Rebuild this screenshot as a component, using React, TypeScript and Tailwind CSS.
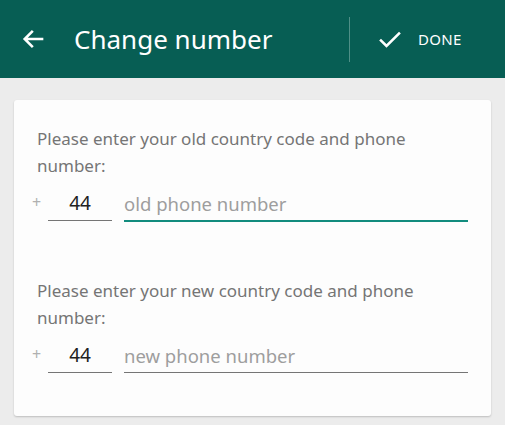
import React from 'react'

function PhoneRow({ placeholder, active }: { placeholder: string; active?: boolean }) {
    return (
        <div className="flex items-end h-[43px]">
            <span className="w-[34px] pl-[18px] text-[16px] text-[#b0b0b0] leading-none pb-[12px]">+</span>
            <div className="w-[64px] border-b border-[#757575] text-center text-[19px] text-[#212121] leading-none pb-[7px] mb-[1px]">
                44
            </div>
            <div
                className={
                    active
                        ? 'ml-[12px] flex-1 border-b-2 border-[#128c7e] text-[18.5px] text-[#9e9e9e] leading-none pb-[7px]'
                        : 'ml-[12px] flex-1 border-b border-[#757575] text-[18.5px] text-[#9e9e9e] leading-none pb-[7px] mb-[1px]'
                }
            >
                {placeholder}
            </div>
        </div>
    )
}

export default function App() {
    return (
        <div className="w-[505px] h-[425px] bg-[#ececec] font-['Noto_Sans',sans-serif] overflow-hidden">
            {/* Toolbar */}
            <div className="h-[78px] bg-[#075e54] flex items-center text-white">
                <svg className="ml-[20px]" width="28" height="28" viewBox="0 0 24 24" fill="none">
                    <path d="M20 12H4.5M11 5l-7 7 7 7" stroke="white" strokeWidth="2.2" />
                </svg>
                <span className="ml-[26px] text-[26px] leading-none">Change number</span>
                <div className="ml-auto w-px h-[45px] bg-[#4f8f87]" />
                <div className="w-[155px] flex items-center">
                    <svg className="ml-[26px]" width="28" height="28" viewBox="0 0 24 24" fill="none">
                        <path d="M3.5 12.5l5.5 5.5L20.5 6.5" stroke="white" strokeWidth="2.2" />
                    </svg>
                    <span className="ml-[14px] text-[15px] tracking-[0.3px]">DONE</span>
                </div>
            </div>

            {/* Card */}
            <div className="mx-[14px] mt-[22px] bg-[#fdfdfd] rounded-[3px] shadow-[0_1px_2px_rgba(0,0,0,0.2)] pt-[25px] pb-[42px] pr-[23px]">
                <p className="pl-[23px] max-w-[430px] text-[17px] leading-[27px] text-[#757575]">
                    Please enter your old country code and phone number:
                </p>
                <PhoneRow placeholder="old phone number" active />

                <p className="pl-[23px] mt-[55px] max-w-[430px] text-[17px] leading-[27px] text-[#757575]">
                    Please enter your new country code and phone number:
                </p>
                <PhoneRow placeholder="new phone number" />
            </div>
        </div>
    )
}
